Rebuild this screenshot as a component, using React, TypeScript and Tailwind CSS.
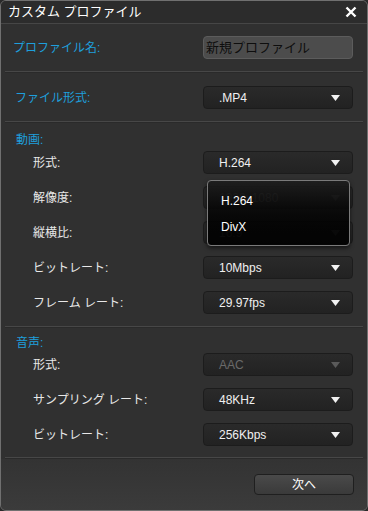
import React from "react";

const font = { fontFamily: '"Liberation Sans", "Noto Sans CJK JP", sans-serif' };

function Arrow({ dim }: { dim?: boolean }) {
  return (
    <svg width="9" height="6" viewBox="0 0 9 6" className="shrink-0">
      <path d="M0 0 H9 L4.5 6 Z" fill={dim ? "#5a5a5a" : "#f2f2f2"} />
    </svg>
  );
}

function Select({ value, dim }: { value: string; dim?: boolean }) {
  return (
    <div className="w-[150px] h-[23px] rounded-[4px] bg-gradient-to-b from-[#2a2a2a] to-[#222222] border border-[#1c1c1c] flex items-center justify-between pl-[15px] pr-[12px]">
      <span className={`text-[12px] ${dim ? "text-[#6a6a6a]" : "text-[#f0f0f0]"}`}>{value}</span>
      <Arrow dim={dim} />
    </div>
  );
}

function Row({ label, value, dim }: { label: string; value: string; dim?: boolean }) {
  return (
    <div className="flex items-center justify-between h-[23px] pl-[32px] pr-[14px]">
      <span className="text-[12px] text-[#e8e8e8]">{label}</span>
      <Select value={value} dim={dim} />
    </div>
  );
}

function Divider() {
  return (
    <div className="mx-[4px]">
      <div className="h-px bg-[#474747]" />
      <div className="h-px bg-[#2a2a2a]" />
    </div>
  );
}

export default function App() {
  return (
    <div className="w-[368px] h-[511px] bg-[#2a2a2a]" style={font}>
      <div className="relative w-[368px] h-[511px] rounded-[6px] border border-[#707070] bg-[#303030] flex flex-col overflow-hidden">
        {/* title bar */}
        <div className="h-[23px] flex items-center justify-between pl-[7px] pr-[10px] border-b border-[#464646] bg-[#2c2c2c]">
          <span className="text-[13px] text-white">カスタム プロファイル</span>
          <svg width="12" height="12" viewBox="0 0 12 12">
            <path d="M1.5 1.5 L10.5 10.5 M10.5 1.5 L1.5 10.5" stroke="#ffffff" strokeWidth="2.4" />
          </svg>
        </div>

        {/* profile name */}
        <div className="pt-[12px] pb-[12px] flex items-center justify-between pl-[12px] pr-[14px]">
          <span className="text-[12px] text-[#1e9fdc]">プロファイル名:</span>
          <div className="w-[150px] h-[23px] rounded-[4px] bg-[#4c4c4c] border border-[#5c5c5c] flex items-center pl-[2px]">
            <span className="text-[13px] text-[#0e0e0e]">新規プロファイル</span>
          </div>
        </div>
        <Divider />

        {/* file format */}
        <div className="pt-[13px] pb-[12px] flex items-center justify-between pl-[14px] pr-[14px]">
          <span className="text-[12px] text-[#1e9fdc]">ファイル形式:</span>
          <Select value=".MP4" />
        </div>
        <Divider />

        {/* video */}
        <div className="pt-[8px] pb-[12px] flex flex-col">
          <div className="pl-[15px] h-[17px] flex items-center text-[12px] text-[#1e9fdc]">動画:</div>
          <div className="flex flex-col gap-[12px] mt-[3px]">
            <Row label="形式:" value="H.264" />
            <Row label="解像度:" value="1920x1080" dim />
            <Row label="縦横比:" value="16:9" dim />
            <Row label="ビットレート:" value="10Mbps" />
            <Row label="フレーム レート:" value="29.97fps" />
          </div>
        </div>
        <Divider />

        {/* audio */}
        <div className="pt-[6px] pb-[11px] flex flex-col">
          <div className="pl-[15px] h-[17px] flex items-center text-[12px] text-[#1e9fdc]">音声:</div>
          <div className="flex flex-col gap-[12px] mt-[2px]">
            <Row label="形式:" value="AAC" dim />
            <Row label="サンプリング レート:" value="48KHz" />
            <Row label="ビットレート:" value="256Kbps" />
          </div>
        </div>
        <Divider />

        {/* footer */}
        <div className="flex-1 bg-gradient-to-b from-[#333333] to-[#3b3b3b] flex justify-end pt-[15px] pr-[13px]">
          <button className="w-[100px] h-[21px] rounded-[4px] border border-[#1f1f1f] bg-gradient-to-b from-[#4a4a4a] to-[#3a3a3a] text-[12px] text-white">
            次へ
          </button>
        </div>

        {/* open dropdown list */}
        <div className="absolute left-[206px] top-[179px] w-[143px] h-[66px] rounded-[4px] border border-[#7a7a7a] bg-gradient-to-b from-[#1c1c1c]/90 to-[#000000]/90 shadow-[0_2px_4px_rgba(0,0,0,0.6)] flex flex-col pl-[13px] pt-[12px] gap-[10px]">
          <span className="text-[12px] text-white leading-[16px]">H.264</span>
          <span className="text-[12px] text-white leading-[16px]">DivX</span>
        </div>
      </div>
    </div>
  );
}
